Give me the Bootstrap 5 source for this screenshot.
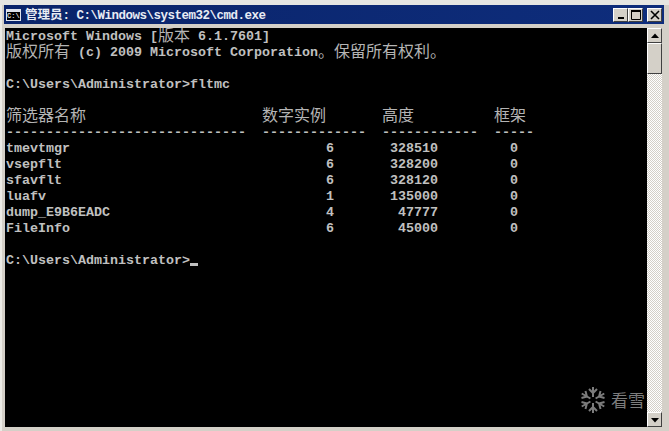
<!DOCTYPE html>
<html lang="zh">
<head>
<meta charset="utf-8">
<title>cmd</title>
<link href="https://cdn.jsdelivr.net/npm/bootstrap@5.3.0/dist/css/bootstrap.min.css" rel="stylesheet">
<style>
html,body{margin:0;height:431px;overflow:hidden;background:#e4e2dc}
.win{height:431px;width:669px;background:#d4d0c8;padding:5px 5px 0 4px;overflow:hidden;box-shadow:inset 0 5px 0 #e6e6e2,inset 2px 0 0 #ecebe6}
.ttl{height:19px;flex:none;background:linear-gradient(90deg,#0a246a,#0e2d7c);color:#e8ecf4;font:bold 12.5px/19px "Liberation Mono","Noto Sans CJK SC",monospace;letter-spacing:-.5px;padding:0 2px;white-space:pre}
.ttl-cjk{font:bold 12.5px/19px "Noto Sans CJK SC",sans-serif;letter-spacing:0}
.ico{width:15px;height:12px;background:#000;border:1px solid #dfe3ec;border-top-width:3px;color:#ddd;font:bold 7px/8px "Liberation Mono",monospace;letter-spacing:0;text-align:left;overflow:hidden}
.wbtn{width:15px;height:14px;background:#d4d0c8;border:1px solid;border-color:#fff #404040 #404040 #fff;padding:0;color:#000}
.wbtn svg{display:block;margin:0 auto}
.cbody{height:399px;margin-top:4px;margin-left:1px;flex:none}
.con{width:642px;flex:none;background:#000;color:#c0c0c0;padding:1px 0 0 1px;font:bold 13.33px/16px "Liberation Mono",monospace;overflow:hidden;position:relative}
.lyn{height:16px;display:block;white-space:pre}
.zh{font:400 16px/10px "Noto Sans CJK SC",sans-serif;vertical-align:top;color:#b4b4b4}
.cur{display:inline-block;width:8px;height:3px;background:#c0c0c0;vertical-align:-2px}
.bar{width:15px;flex:none;background-color:#e8e6e0;background-image:conic-gradient(#d4d0c8 25%,#fff 0 50%,#d4d0c8 0 75%,#fff 0);background-size:2px 2px}
.sbtn{width:15px;height:15px;background:#d4d0c8;border:1px solid;border-color:#fff #404040 #404040 #fff;padding:0;flex:none}
.sbtn svg{display:block;margin:0 auto}
.thumb{width:15px;height:31px;flex:none;background:#d4d0c8;border:1px solid;border-color:#fff #404040 #404040 #fff}
.wm{position:absolute;left:574px;top:358px;color:#7c7c7c;font:400 17px/20px "Noto Sans CJK SC",sans-serif;display:flex;align-items:center;gap:4px;white-space:nowrap}
</style>
</head>
<body>
<div class="win d-flex flex-column">
<div class="ttl d-flex align-items-center">
<div class="ico flex-shrink-0 me-1">C:\</div>
<span><span class="ttl-cjk">管理员</span>: C:\Windows\system32\cmd.exe</span>
<div class="ms-auto d-flex">
<button class="wbtn" aria-label="min"><svg width="10" height="10"><rect x="2" y="7" width="6" height="2"/></svg></button>
<button class="wbtn" aria-label="max"><svg width="12" height="10"><path d="M1.5 1.5h9v8h-9z" fill="none" stroke="#000"/><rect x="1" y="0" width="10" height="2"/></svg></button>
<button class="wbtn ms-1" aria-label="close"><svg width="10" height="10"><path d="M1 1l8 8M9 1l-8 8" stroke="#000" stroke-width="1.6"/></svg></button>
</div>
</div>
<div class="cbody d-flex">
<div class="con">
<span class="lyn">Microsoft Windows [<span class="zh">版本</span> 6.1.7601]</span>
<span class="lyn"><span class="zh">版权所有</span> (c) 2009 Microsoft Corporation<span class="zh">。保留所有权利。</span></span>
<span class="lyn"> </span>
<span class="lyn">C:\Users\Administrator&gt;fltmc</span>
<span class="lyn"> </span>
<span class="lyn"><span class="zh">筛选器名称</span>                      <span class="zh">数字实例</span>       <span class="zh">高度</span>          <span class="zh">框架</span></span>
<span class="lyn">------------------------------  -------------  ------------  -----</span>
<span class="lyn">tmevtmgr                                6       328510         0</span>
<span class="lyn">vsepflt                                 6       328200         0</span>
<span class="lyn">sfavflt                                 6       328120         0</span>
<span class="lyn">luafv                                   1       135000         0</span>
<span class="lyn">dump_E9B6EADC                           4        47777         0</span>
<span class="lyn">FileInfo                                6        45000         0</span>
<span class="lyn"> </span>
<span class="lyn">C:\Users\Administrator&gt;<span class="cur"></span></span>
<div class="wm"><svg width="28" height="28" viewBox="-14 -14 28 28" stroke="#7c7c7c" stroke-width="2" fill="none"><g id="arm"><path d="M0-3V-13M-4-11L0-7L4-11"/></g><use href="#arm" transform="rotate(60)"/><use href="#arm" transform="rotate(120)"/><use href="#arm" transform="rotate(180)"/><use href="#arm" transform="rotate(240)"/><use href="#arm" transform="rotate(300)"/></svg><span>看雪</span></div>
</div>
<div class="bar d-flex flex-column">
<button class="sbtn" aria-label="up"><svg width="8" height="8"><path d="M4 1.5L8 6H0z"/></svg></button>
<div class="thumb"></div>
<div class="flex-grow-1"></div>
<button class="sbtn" aria-label="down"><svg width="8" height="8"><path d="M0 2h8L4 6.5z"/></svg></button>
</div>
</div>
</div>
<script src="https://cdn.jsdelivr.net/npm/bootstrap@5.3.0/dist/js/bootstrap.bundle.min.js"></script>
</body>
</html>
